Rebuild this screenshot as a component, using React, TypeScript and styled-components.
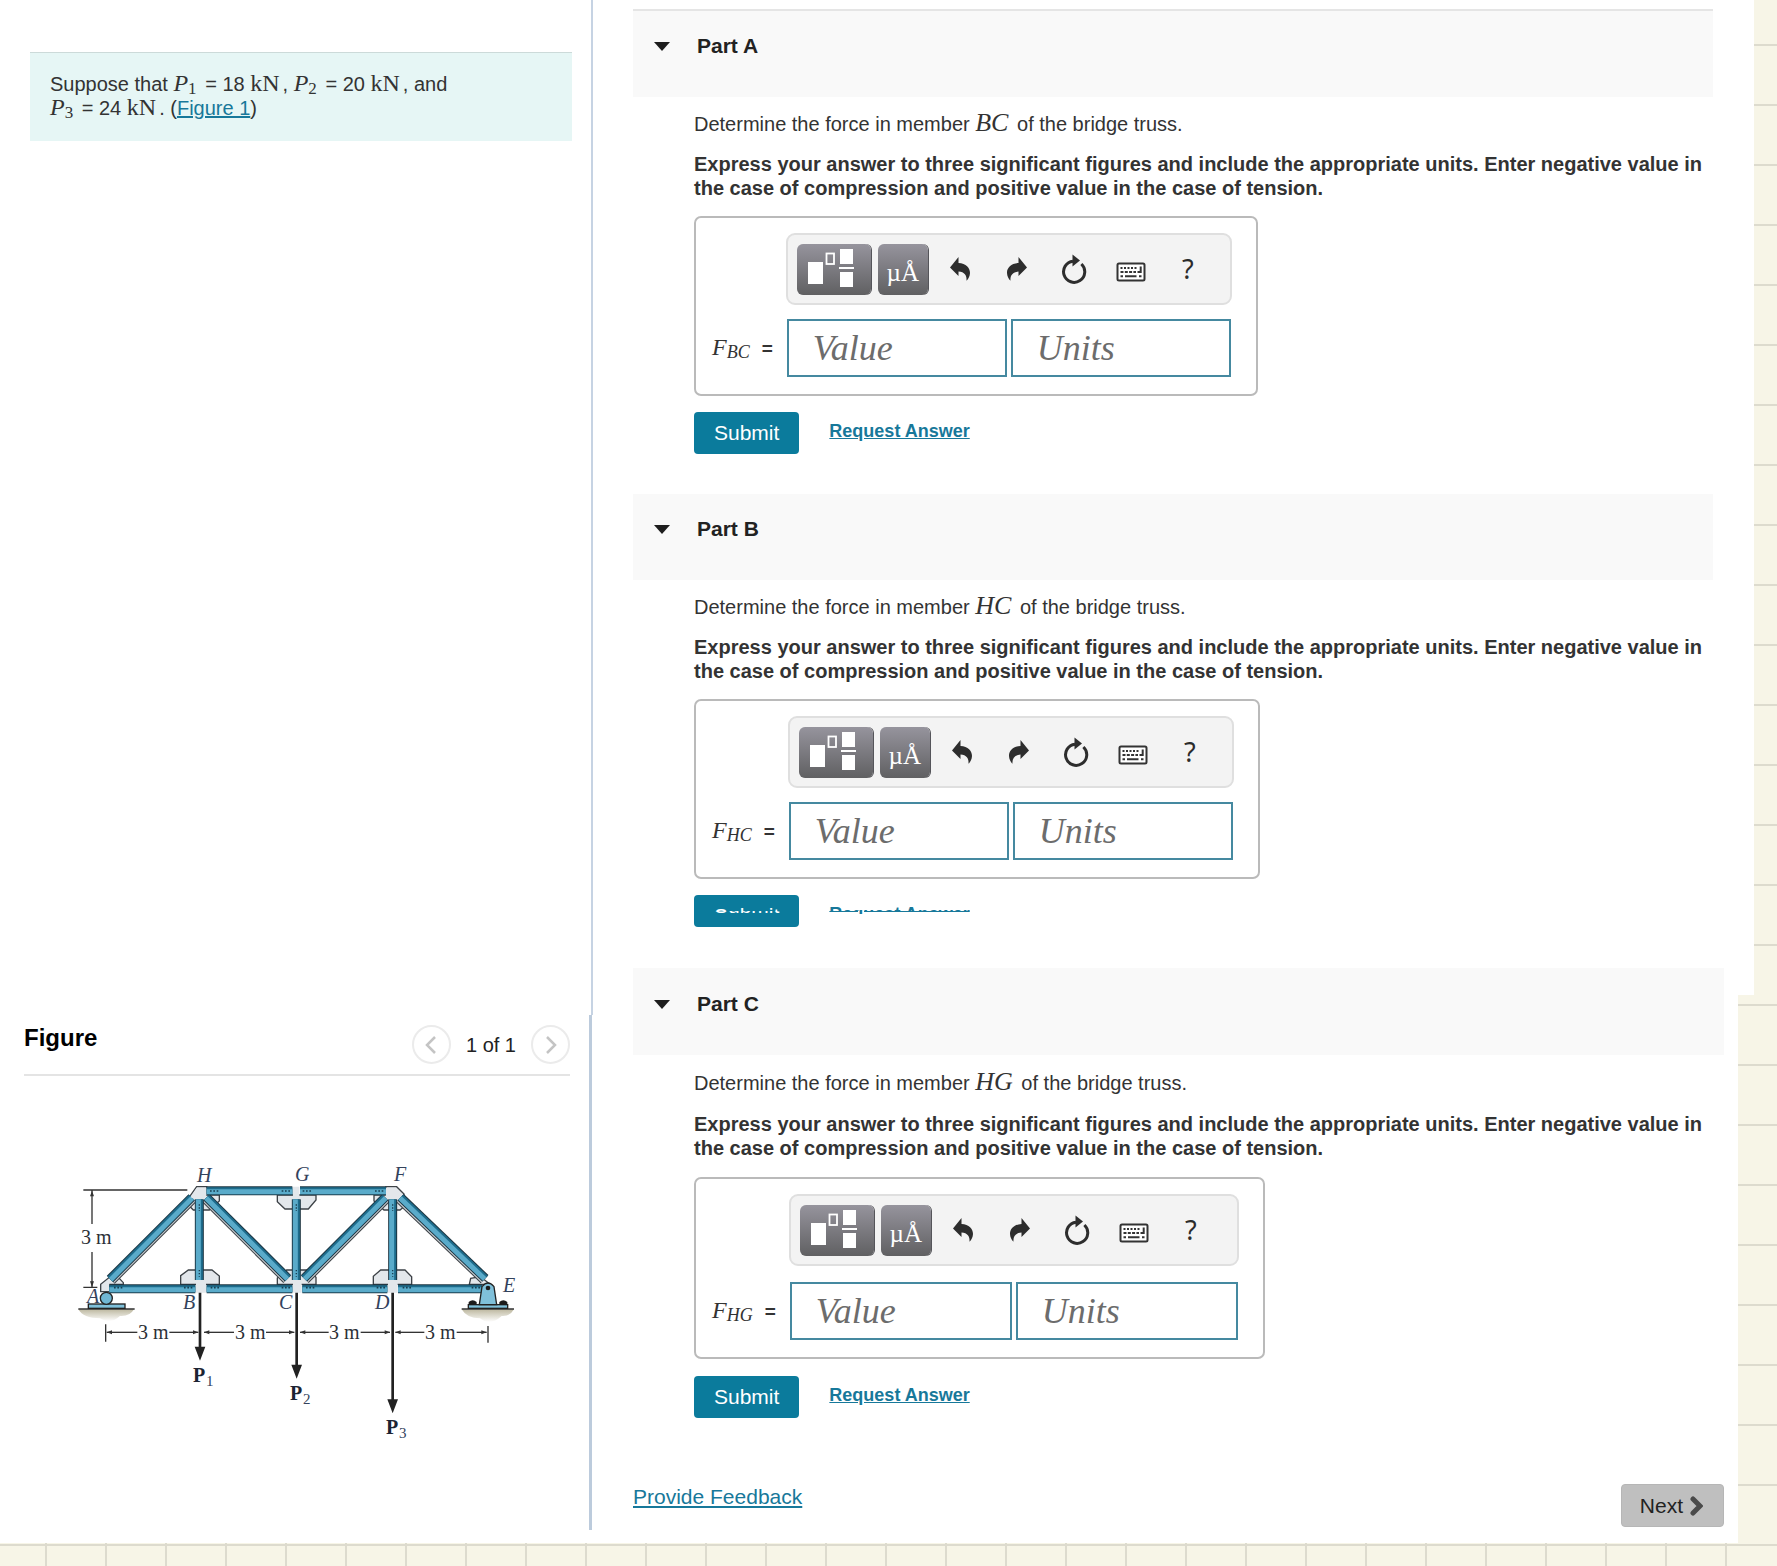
import React, { useState } from "react";
import styled, { createGlobalStyle, css } from "styled-components";

const SANS = '"Liberation Sans", Arial, Helvetica, sans-serif';
const SERIF = '"Liberation Serif", "Times New Roman", serif';
const TEAL = "#0b7b9c";

const GlobalStyle = createGlobalStyle`
  *, *::before, *::after { box-sizing: border-box; }
  html {
    background-color: #f7f5e7;
    background-image:
      linear-gradient(#dddbce 2px, transparent 2px),
      linear-gradient(90deg, #dddbce 2px, transparent 2px);
    background-size: 60px 60px;
    background-position: 0 44px, 45px 0;
  }
  body {
    margin: 0;
    font-family: ${SANS};
    font-size: 20px;
    line-height: 24px;
    color: #333;
  }
  h2, p { margin: 0; }
  button { font-family: inherit; cursor: pointer; }
`;

const Page = styled.div`
  display: grid;
  grid-template-columns: 593px minmax(0, 1fr);
`;

/* ---------- left column ---------- */

const Sidebar = styled.aside`
  display: flex;
  flex-direction: column;
  padding-bottom: 13px;
  background: #fff;
`;

const IntroPane = styled.div`
  flex: 1;
  padding: 52px 19px 0 30px;
  border-right: 2px solid #c6d3e3;
`;

const Intro = styled.p`
  padding: 19px 20px 21px;
  border-top: 1px solid #ccdad9;
  background: #e6f6f5;
`;

const FigurePane = styled.section`
  margin-right: 1px;
  padding: 10px 19px 70px 24px;
  border-right: 3px solid #bccbdc;
`;

const FigureHead = styled.header`
  display: flex;
  align-items: flex-start;
  justify-content: space-between;
  padding-bottom: 10px;
  border-bottom: 2px solid #e4e4e4;
`;

const FigureTitle = styled.h2`
  font-size: 24px;
  line-height: 26px;
  color: #000;
`;

const Pager = styled.nav`
  display: flex;
  align-items: center;
  gap: 15px;
  color: #222;
`;

const RoundButton = styled.button`
  display: grid;
  place-items: center;
  width: 39px;
  height: 39px;
  padding: 0;
  border: 2px solid #ebebeb;
  border-radius: 50%;
  background: #fff;
`;

const Drawing = styled.svg`
  display: block;
  width: 480px;
  max-width: 100%;
  margin: 64px 0 0 36px;
  overflow: visible;
`;

const DrawingText = styled.text<{ $kind?: "point" | "load" | "sub" }>`
  font-family: ${SERIF};
  font-size: 20px;
  fill: #2b2f36;
  ${(p) => p.$kind === "point" && css`font-style: italic; fill: #33425c;`}
  ${(p) => p.$kind === "load" && css`font-weight: bold; fill: #1c2433;`}
  ${(p) => p.$kind === "sub" && css`font-size: 15px; fill: #33425c;`}
`;

/* ---------- right column ---------- */

const Main = styled.main`
  padding: 9px 0 16px 40px;
  background:
    linear-gradient(#fff, #fff) 0 0 / calc(100% - 23px) 995px no-repeat,
    linear-gradient(#fff, #fff) 0 0 / calc(100% - 39px) 100% no-repeat;
`;

const PartSection = styled.section<{ $roomy?: boolean }>`
  margin-right: ${(p) => (p.$roomy ? 53 : 64)}px;
`;

const PartHeader = styled.header<{ $ruled?: boolean; $roomy?: boolean }>`
  height: ${(p) => (p.$ruled ? 88 : p.$roomy ? 87 : 86)}px;
  padding: ${(p) => (p.$roomy ? 24 : 23)}px 21px;
  background: #f9f9f9;
  ${(p) => p.$ruled && css`border-top: 2px solid #e5e5e5;`}
`;

const PartTitle = styled.h2`
  font-size: 21px;
  line-height: 24px;
`;

const PartToggle = styled.button`
  display: flex;
  align-items: center;
  gap: 27px;
  padding: 0;
  border: 0;
  background: none;
  font-size: inherit;
  font-weight: bold;
  line-height: inherit;
  color: #222;
`;

const Caret = styled.span<{ $open: boolean }>`
  border: 8px solid transparent;
  border-top: 9px solid #1e1e1e;
  border-bottom: 0;
  rotate: ${(p) => (p.$open ? "0deg" : "-90deg")};
`;

const PartBody = styled.div<{ $roomy?: boolean }>`
  display: flex;
  flex-direction: column;
  align-items: flex-start;
  gap: ${(p) => (p.$roomy ? 17 : 16)}px;
  padding: ${(p) => (p.$roomy ? 16 : 15)}px 0 40px 61px;
`;

const Instructions = styled.p`
  font-weight: bold;
`;

const MathText = styled.span<{ $size?: number; $upright?: boolean }>`
  font-family: ${SERIF};
  font-size: ${(p) => p.$size ?? 24}px;
  font-style: ${(p) => (p.$upright ? "normal" : "italic")};
  line-height: 0;
  margin-right: 3px;
`;

const Sub = styled.sub<{ $size?: number; $upright?: boolean }>`
  font-size: ${(p) => p.$size ?? 18}px;
  font-style: ${(p) => (p.$upright ? "normal" : "italic")};
  line-height: 0;
  vertical-align: -3px;
`;

const TextLink = styled.a`
  color: #17789a;
  text-decoration: underline;
`;

const AnswerBox = styled.div<{ $roomy?: boolean }>`
  display: grid;
  grid-template-columns: auto auto;
  align-items: center;
  column-gap: 13px;
  row-gap: ${(p) => (p.$roomy ? 16 : 14)}px;
  padding: 15px 24px 17px 16px;
  border: 2px solid #bababa;
  border-radius: 7px;
`;

const Toolbar = styled.div`
  grid-column: 2;
  display: flex;
  align-items: center;
  gap: 7px;
  height: 72px;
  padding: 0 9px;
  border: 2px solid #dfdfdf;
  border-radius: 9px;
  background: #f3f3f3;
`;

const ToolButton = styled.button<{ $wide?: boolean; $solid?: boolean }>`
  display: grid;
  place-items: center;
  width: ${(p) => (p.$wide ? 74 : 50)}px;
  height: 51px;
  padding: 0;
  border: 0;
  border-radius: 6px;
  background: none;
  font-family: "Noto Sans", ${SANS};
  font-size: 27px;
  line-height: 48px;
  color: #2b2b2b;
  ${(p) =>
    p.$solid &&
    css`
      background: linear-gradient(#96949d, #606062);
      box-shadow: 1px 0 0 #55555a;
      font-family: ${SERIF};
      font-size: 25px;
      line-height: 57px;
      color: #fff;
    `}
`;

const SymbolLabel = styled.label`
  font-family: ${SERIF};
  font-size: 24px;
  font-style: italic;
  white-space: nowrap;
`;

const Equals = styled.span`
  margin-left: 12px;
  font-family: ${SANS};
  font-size: 19px;
  font-style: normal;
  font-weight: bold;
`;

const Fields = styled.div`
  display: flex;
  gap: 4px;
  padding: 0 1px;
`;

const Field = styled.input<{ $roomy?: boolean }>`
  width: ${(p) => (p.$roomy ? 222 : 220)}px;
  height: 58px;
  padding: 0 24px;
  border: 2px solid #4589a0;
  border-radius: 0;
  background: #fff;
  font-family: ${SERIF};
  font-size: 36px;
  font-style: italic;
  color: #333;
  &::placeholder { color: #6c6c6c; opacity: 1; }
`;

const Actions = styled.div`
  display: flex;
  align-items: flex-start;
  gap: 30px;
`;

const SubmitButton = styled.button`
  height: 42px;
  padding: 0 20px;
  border: 0;
  border-radius: 4px;
  background: ${TEAL};
  font-size: 21px;
  color: #fff;
`;

const RequestLink = styled(TextLink)`
  font-size: 18px;
  font-weight: bold;
  line-height: 38px;
`;

const Slice = styled.div<{ $from: number; $height: number }>`
  height: ${(p) => p.$height}px;
  overflow: hidden;
  & > * { margin-top: -${(p) => p.$from}px; }
`;

const Footer = styled.footer`
  display: flex;
  align-items: flex-start;
  justify-content: space-between;
  margin: 26px 53px 0 0;
`;

const FeedbackLink = styled(TextLink)`
  font-size: 21px;
  line-height: 26px;
`;

const NextButton = styled.button`
  display: flex;
  align-items: center;
  gap: 7px;
  height: 43px;
  padding: 0 20px 0 18px;
  border: 1px solid #b6b6b6;
  border-radius: 4px;
  background: #bfbfbf;
  font-size: 21px;
  color: #222;
`;

/* ---------- icons ---------- */

const TemplateIcon = () => (
  <svg width="74" height="51" viewBox="0 0 74 51" aria-hidden="true">
    <g fill="#fff">
      <rect x="11" y="18" width="15" height="22" />
      <rect x="43" y="5" width="13" height="15" />
      <rect x="42" y="23" width="15" height="2" />
      <rect x="43" y="28" width="13" height="15" />
    </g>
    <rect x="29.5" y="9.5" width="7.500" height="10.5" fill="none" stroke="#fff" strokeWidth="1.8" />
  </svg>
);

const BendArrow = ({ flip }: { flip?: boolean }) => (
  <svg width="22" height="24" viewBox="0 0 22 24" aria-hidden="true">
    <path
      transform={flip ? "matrix(-1 0 0 1 22 0)" : undefined}
      d="M1 10.5 L9.5 0 V6 C17 6.400 21.200 11 21 16 C20.900 19 19.500 22 17.500 23.800 C18 18.500 15.500 15 9.500 14.600 V19 Z"
      fill="#2d2d2d"
    />
  </svg>
);

const ResetIcon = () => (
  <svg width="26" height="30" viewBox="0 0 26 30" aria-hidden="true">
    <path d="M12 7.200 A10.600 10.600 0 1 0 20.400 10" fill="none" stroke="#2d2d2d" strokeWidth="3" />
    <path d="M11.500 0.500 L19 6.500 L11.500 12.500 Z" fill="#2d2d2d" />
  </svg>
);

const KeyboardIcon = () => (
  <svg width="30" height="26" viewBox="0 0 30 26" aria-hidden="true">
    <rect x="1.500" y="7.500" width="27" height="17" rx="1.500" fill="#fff" stroke="#333" strokeWidth="2" />
    <g stroke="#333" strokeWidth="2" fill="none">
      <path d="M4.500 12 H21" strokeDasharray="2 1.500" />
      <path d="M4.500 16 H20" strokeDasharray="3 1.300" />
      <path d="M4.500 20.300 H7 M9 20.300 H20.500 M23 20.300 H25.500" />
      <path d="M24.700 10.500 V16 H21.500" />
    </g>
  </svg>
);

const Chevron = ({ left }: { left?: boolean }) => (
  <svg width="12" height="18" viewBox="0 0 12 18" aria-hidden="true">
    <path d={left ? "M10 1 L2 9 L10 17" : "M2 1 L10 9 L2 17"} fill="none" stroke="#c4c4c4" strokeWidth="2.500" />
  </svg>
);

const BoldChevron = () => (
  <svg width="13" height="20" viewBox="0 0 13 20" aria-hidden="true">
    <path d="M3 3 L10 10 L3 17" fill="none" stroke="#4a4a4a" strokeWidth="5" strokeLinecap="round" />
  </svg>
);

/* ---------- truss drawing ---------- */

type Pts = [number, number, number, number];

const Member = ({ at, edge }: { at: Pts; edge?: boolean }) => {
  const [x1, y1, x2, y2] = at;
  const len = Math.hypot(x2 - x1, y2 - y1);
  let nx = -(y2 - y1) / len;
  let ny = (x2 - x1) / len;
  if (ny < 0) {
    nx = -nx;
    ny = -ny;
  }
  const shifted = (d: number) => ({ x1: x1 + nx * d, y1: y1 + ny * d, x2: x2 + nx * d, y2: y2 + ny * d });
  return (
    <g>
      {edge && <line {...shifted(5)} stroke="#3a3f44" strokeWidth="30" />}
      {edge && <line {...shifted(5)} stroke="#c3cacf" strokeWidth="24" />}
      <line {...shifted(0)} stroke="#1d3440" strokeWidth="27" />
      <line {...shifted(0)} stroke="#1d6c8c" strokeWidth="21" />
      <line {...shifted(3)} stroke="#5aabca" strokeWidth="15" />
    </g>
  );
};

const chords: Pts[] = [
  [440, 152, 697, 152],
  [720, 152, 978, 152],
  [148, 446, 406, 446],
  [440, 446, 697, 446],
  [727, 446, 982, 446],
  [1014, 446, 1266, 446],
];
const posts: Pts[] = [
  [418, 178, 418, 420],
  [709, 178, 709, 420],
  [998, 178, 998, 420],
];
const diagonals: Pts[] = [
  [150, 417, 395, 172],
  [440, 172, 684, 415],
  [732, 415, 975, 172],
  [1022, 172, 1276, 415],
];
const plates = [
  "362,433 362,407 385,390 456,390 478,408 478,433",
  "652,433 652,414 680,390 744,390 768,412 768,433",
  "940,433 940,409 962,390 1035,390 1055,410 1055,433",
  "652,165 768,165 768,180 745,207 675,207 652,185",
  "385,175 410,140 440,140 440,165 478,165 478,183 448,210 400,210 385,195",
  "978,140 1010,140 1032,162 1032,200 1020,210 972,210 942,183 942,165 978,165",
  "122,455 122,433 148,412 175,412 190,428 190,433 150,433 150,455",
  "1228,433 1232,415 1262,410 1290,433",
];
const rivets: [number, number][] = [
  [450, 153], [665, 153], [728, 153], [945, 153],
  [162, 443], [372, 443], [452, 443], [665, 443],
  [738, 443], [950, 443], [1028, 443], [1235, 443],
];
const dims: [number, number][] = [
  [140, 232], [415, 328], [432, 522], [703, 618],
  [720, 806], [990, 902], [1006, 1093], [1280, 1190],
];
const loads: [number, number][] = [[420, 662], [710, 716], [998, 820]];
const points: [string, number, number][] = [
  ["H", 137, 42], ["G", 235, 41], ["F", 334, 41], ["A", 27, 163],
  ["B", 123, 169], ["C", 219, 169], ["D", 315, 169], ["E", 443, 152],
];
const lengths: [number, number][] = [[21, 104], [78, 199], [175, 199], [269, 199], [365, 199]];
const forces: [number, number][] = [[133, 242], [230, 260], [326, 294]];

const Truss = () => (
  <Drawing viewBox="0 0 480 320" role="img" aria-label="Bridge truss">
    <defs>
      <linearGradient id="soil" x1="0" y1="0" x2="0" y2="1">
        <stop offset="0" stopColor="#bdb8a0" />
        <stop offset="1" stopColor="#fff" />
      </linearGradient>
    </defs>
    <g transform="scale(0.33333)">
      <path d="M55 508 H222 Q210 530 180 528 Q150 555 120 535 Q70 535 55 508Z" fill="url(#soil)" />
      <path d="M1205 508 H1362 Q1350 530 1325 528 Q1290 560 1260 535 Q1220 535 1205 508Z" fill="url(#soil)" />
      <path d="M55 507 H224 M1205 507 H1362" stroke="#333" strokeWidth="4" />
      {plates.map((p) => (
        <polygon key={p} points={p} fill="#e3e7eb" stroke="#3d4247" strokeWidth="4" />
      ))}
      {diagonals.map((d) => <Member key={d[0]} at={d} edge />)}
      <path d="M392 172 L410 143 H440 V165 L430 178 H405Z M978 143 H1008 L1028 163 L1015 178 H985 L976 165Z" fill="#e3e7eb" />
      {chords.map((d) => <Member key={d.join()} at={d} />)}
      {posts.map((d) => <Member key={d[0]} at={d} />)}
      <path d="M408 422 H438 V458 H408Z M699 422 H725 V458 H699Z M984 422 H1013 V458 H984Z M699 140 H718 V175 H699Z" fill="#e3e7eb" />
      {rivets.map(([x, y]) => (
        <path key={`${x}-${y}`} d={`M${x} ${y} h26`} stroke="#173f52" strokeWidth="5" strokeDasharray="5 5" />
      ))}
      {[193, 390].map((y) => (
        <path key={y} d={`M418 ${y} v20 M709 ${y} v20 M998 ${y} v20`} stroke="#173f52" strokeWidth="4" strokeDasharray="4 5" />
      ))}
      <rect x="85" y="492" width="110" height="13" fill="#7fc0da" stroke="#222" strokeWidth="4" />
      <circle cx="139" cy="475" r="18" fill="#6fb6d3" stroke="#222" strokeWidth="4" />
      <rect x="1225" y="494" width="118" height="11" fill="#7fc0da" stroke="#222" strokeWidth="4" />
      <path d="M1226 494 v-8 q12 -10 24 0 v8Z M1318 494 v-8 q12 -10 24 0 v8Z" fill="#1c1c1c" />
      <path d="M1258 494 L1266 440 Q1284 418 1302 440 L1310 494Z" fill="#7fc0da" stroke="#222" strokeWidth="4" />
      <circle cx="1284" cy="444" r="7" fill="#1c1c1c" />
      <g stroke="#333" strokeWidth="4" fill="none">
        <path d="M70 150 H382 M70 442 H112 M96 152 V252 M96 336 V440 M137 553 V605 M1284 558 V608" />
        {dims.map(([a, b]) => <path key={a} d={`M${a} 577 H${b}`} />)}
      </g>
      <path d="M96 152 l-6 17 h12Z M96 441 l-6 -17 h12Z" fill="#333" />
      {dims.map(([a, b]) => {
        const s = a < b ? 16 : -16;
        return <path key={a} d={`M${a} 577 l${s} -6 v12Z`} fill="#333" />;
      })}
      {loads.map(([x, y]) => (
        <path key={x} d={`M${x - 4} 458 h8 V${y - 42} h12 L${x} ${y} L${x - 16} ${y - 42} h12Z`} fill="#222" />
      ))}
    </g>
    {points.map(([t, x, y]) => <DrawingText key={t} $kind="point" x={x} y={y}>{t}</DrawingText>)}
    {lengths.map(([x, y]) => <DrawingText key={x} x={x} y={y}>3 m</DrawingText>)}
    {forces.map(([x, y], i) => (
      <g key={x}>
        <DrawingText $kind="load" x={x} y={y}>P</DrawingText>
        <DrawingText $kind="sub" x={x + 13} y={y + 4}>{i + 1}</DrawingText>
      </g>
    ))}
  </Drawing>
);

/* ---------- parts ---------- */

const Force = ({ n, value, end }: { n: number; value: number; end: string }) => (
  <>
    <MathText>P<Sub $size={17} $upright>{n}</Sub></MathText>
    {" = "}{value} <MathText $upright>kN</MathText>{end}
  </>
);

const ActionRow = () => (
  <Actions>
    <SubmitButton type="button">Submit</SubmitButton>
    <RequestLink href="#request">Request Answer</RequestLink>
  </Actions>
);

type PartProps = { name: string; member: string; ruled?: boolean; roomy?: boolean; torn?: boolean };

const Part = ({ name, member, ruled, roomy, torn }: PartProps) => {
  const [open, setOpen] = useState(true);
  const id = `value-${member}`;
  return (
    <PartSection $roomy={roomy}>
      <PartHeader $ruled={ruled} $roomy={roomy}>
        <PartTitle>
          <PartToggle type="button" aria-expanded={open} onClick={() => setOpen(!open)}>
            <Caret $open={open} />
            {name}
          </PartToggle>
        </PartTitle>
      </PartHeader>
      {open && (
        <PartBody $roomy={roomy}>
          <p>
            Determine the force in member <MathText $size={26}>{member}</MathText> of the bridge truss.
          </p>
          <Instructions>
            Express your answer to three significant figures and include the appropriate units. Enter negative value in
            the case of compression and positive value in the case of tension.
          </Instructions>
          <AnswerBox $roomy={roomy}>
            <Toolbar role="toolbar" aria-label="Equation tools">
              <ToolButton type="button" $wide $solid aria-label="Templates"><TemplateIcon /></ToolButton>
              <ToolButton type="button" $solid aria-label="Symbols">µÅ</ToolButton>
              <ToolButton type="button" aria-label="Undo"><BendArrow /></ToolButton>
              <ToolButton type="button" aria-label="Redo"><BendArrow flip /></ToolButton>
              <ToolButton type="button" aria-label="Reset"><ResetIcon /></ToolButton>
              <ToolButton type="button" aria-label="Keyboard shortcuts"><KeyboardIcon /></ToolButton>
              <ToolButton type="button" aria-label="Help">?</ToolButton>
            </Toolbar>
            <SymbolLabel htmlFor={id}>
              F<Sub>{member}</Sub>
              <Equals>=</Equals>
            </SymbolLabel>
            <Fields>
              <Field id={id} $roomy={roomy} placeholder="Value" />
              <Field $roomy={roomy} placeholder="Units" aria-label="Units" />
            </Fields>
          </AnswerBox>
          {torn ? (
            <div>
              <Slice $from={0} $height={16}><ActionRow /></Slice>
              <Slice $from={26} $height={17} aria-hidden="true" inert><ActionRow /></Slice>
            </div>
          ) : (
            <ActionRow />
          )}
        </PartBody>
      )}
    </PartSection>
  );
};

export default function App() {
  return (
    <>
      <GlobalStyle />
      <Page>
        <Sidebar>
          <IntroPane>
            <Intro>
              Suppose that <Force n={1} value={18} end=", " />
              <Force n={2} value={20} end=", and" />
              <br />
              <Force n={3} value={24} end=". " />(<TextLink href="#figure">Figure 1</TextLink>)
            </Intro>
          </IntroPane>
          <FigurePane id="figure">
            <FigureHead>
              <FigureTitle>Figure</FigureTitle>
              <Pager aria-label="Figures">
                <RoundButton type="button" aria-label="Previous figure"><Chevron left /></RoundButton>
                <span>1 of 1</span>
                <RoundButton type="button" aria-label="Next figure"><Chevron /></RoundButton>
              </Pager>
            </FigureHead>
            <Truss />
          </FigurePane>
        </Sidebar>
        <Main>
          <Part name="Part A" member="BC" ruled />
          <Part name="Part B" member="HC" torn />
          <Part name="Part C" member="HG" roomy />
          <Footer>
            <FeedbackLink href="#feedback">Provide Feedback</FeedbackLink>
            <NextButton type="button">Next <BoldChevron /></NextButton>
          </Footer>
        </Main>
      </Page>
    </>
  );
}
